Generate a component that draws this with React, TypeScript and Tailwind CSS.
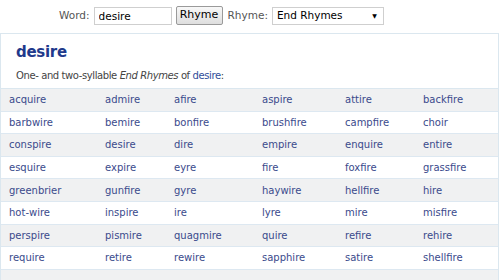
import React from "react";

const rows: string[][] = [
  ["acquire", "admire", "afire", "aspire", "attire", "backfire"],
  ["barbwire", "bemire", "bonfire", "brushfire", "campfire", "choir"],
  ["conspire", "desire", "dire", "empire", "enquire", "entire"],
  ["esquire", "expire", "eyre", "fire", "foxfire", "grassfire"],
  ["greenbrier", "gunfire", "gyre", "haywire", "hellfire", "hire"],
  ["hot-wire", "inspire", "ire", "lyre", "mire", "misfire"],
  ["perspire", "pismire", "quagmire", "quire", "refire", "rehire"],
  ["require", "retire", "rewire", "sapphire", "satire", "shellfire"],
];

const SearchBar = () => (
  <div className="flex items-center h-[30px] pt-[1px] pl-[59px] text-[10.5px] text-[#555]">
    <span>Word:</span>
    <input
      defaultValue="desire"
      className="ml-[4px] w-[78px] h-[18px] border border-[#cfcfcf] px-[4px] text-[10.5px] text-black outline-none"
    />
    <button className="ml-[4px] w-[47px] h-[19px] border border-[#9a9a9a] rounded-[2px] bg-gradient-to-b from-[#f8f8f8] to-[#dedede] text-[11px] text-black">
      Rhyme
    </button>
    <span className="ml-[5px]">Rhyme:</span>
    <div className="ml-[4px] w-[112px] h-[18px] border border-[#cfcfcf] flex items-center justify-between pl-[4px] pr-[6px] text-black">
      <span>End Rhymes</span>
      <span className="text-[6px]">▼</span>
    </div>
  </div>
);

const App: React.FC = () => {
  return (
    <div className="w-[500px] h-[280px] overflow-hidden bg-white font-['DejaVu_Sans',sans-serif]">
      <SearchBar />
      <div className="mt-[3px] border border-[#dbe7ef] mr-[1px]">
        <div className="px-[15px] pt-[8px] h-[54px]">
          <h1 className="text-[15px] font-bold text-[#1f3a8c] leading-[20px] tracking-[-0.3px]">desire</h1>
          <p className="mt-[6px] text-[10px] text-[#444] tracking-[-0.4px]">
            One- and two-syllable <i>End Rhymes</i> of{" "}
            <span className="text-[#2f4d9a]">desire</span>:
          </p>
        </div>
        <div className="border-t border-[#dbe7ef]">
          {rows.map((r, i) => (
            <div
              key={i}
              className={`grid grid-cols-[96px_69px_88px_83px_78px_1fr] h-[22.6px] items-center border-b border-[#dde8f1] text-[10px] text-[#3a4a8c] ${
                i % 2 === 0 ? "bg-[#f0f1f2]" : "bg-white"
              }`}
            >
              {r.map((w) => (
                <span key={w} className="pl-[8px]">
                  {w}
                </span>
              ))}
            </div>
          ))}
          <div className="h-[20px] bg-[#f0f1f2]" />
        </div>
      </div>
    </div>
  );
};

export default App;
